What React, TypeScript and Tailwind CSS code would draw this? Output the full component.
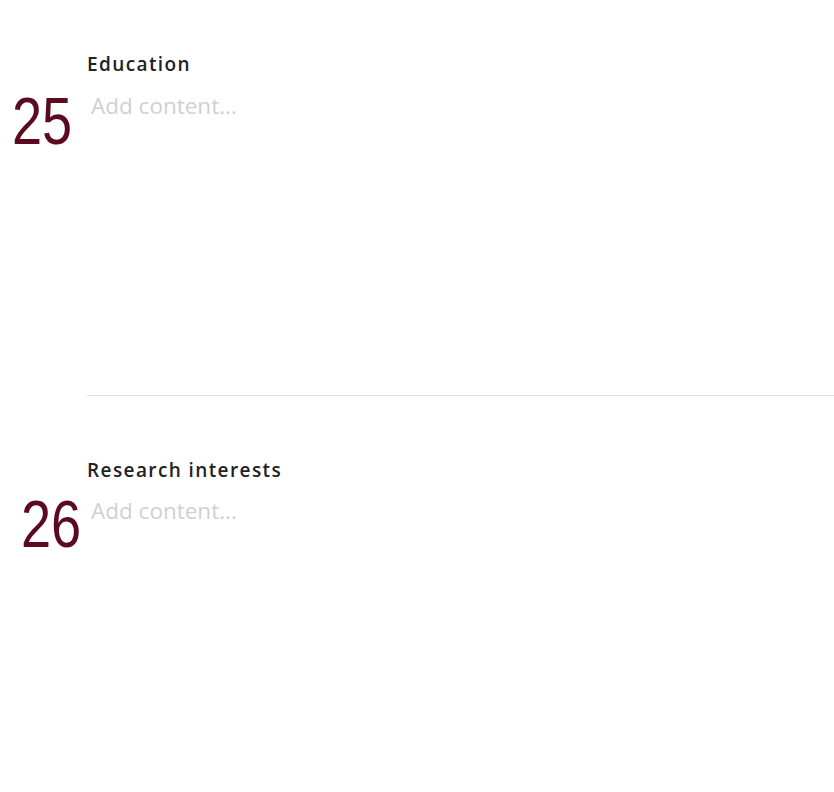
const sections = [
  { n: "25", title: "Education", top: "pt-[51.5px]", gap: "mt-[15.5px]", numPad: "pl-[12px]", numShift: "-mt-[3px]" },
  { n: "26", title: "Research interests", top: "pt-[62px]", gap: "mt-[13.5px]", numPad: "pl-[21px]", numShift: "-mt-[5px]" },
];

type SectionProps = { n: string; title: string; top: string; gap: string; numPad: string; numShift: string };

function Section({ n, title, top, gap, numPad, numShift }: SectionProps) {
  return (
    <div className={`flex flex-col ${top}`}>
      <h2 className="ml-[87px] text-[19px] font-semibold leading-[24px] tracking-[1.4px] text-[#222222] [font-family:'Open_Sans',sans-serif]">
        {title}
      </h2>
      <div className={`${gap} flex items-start`}>
        <div className={`w-[87px] shrink-0 ${numPad} ${numShift}`}>
          <span className="block origin-left scale-x-[0.82] text-[66px] leading-[66px] text-[#5c0a20] [font-family:'Liberation_Sans',Arial,sans-serif]">
            {n}
          </span>
        </div>
        <p className="ml-[4px] text-[22.5px] leading-[30px] text-[#d0d0d0] [font-family:'Open_Sans',sans-serif]">
          Add content...
        </p>
      </div>
    </div>
  );
}

export default function App() {
  return (
    <div className="h-[792px] w-[834px] overflow-hidden bg-white">
      <div className="h-[395px]">
        <Section {...sections[0]} />
      </div>
      <div className="ml-[87px] h-px bg-[#e4e4e4]" />
      <Section {...sections[1]} />
    </div>
  );
}
